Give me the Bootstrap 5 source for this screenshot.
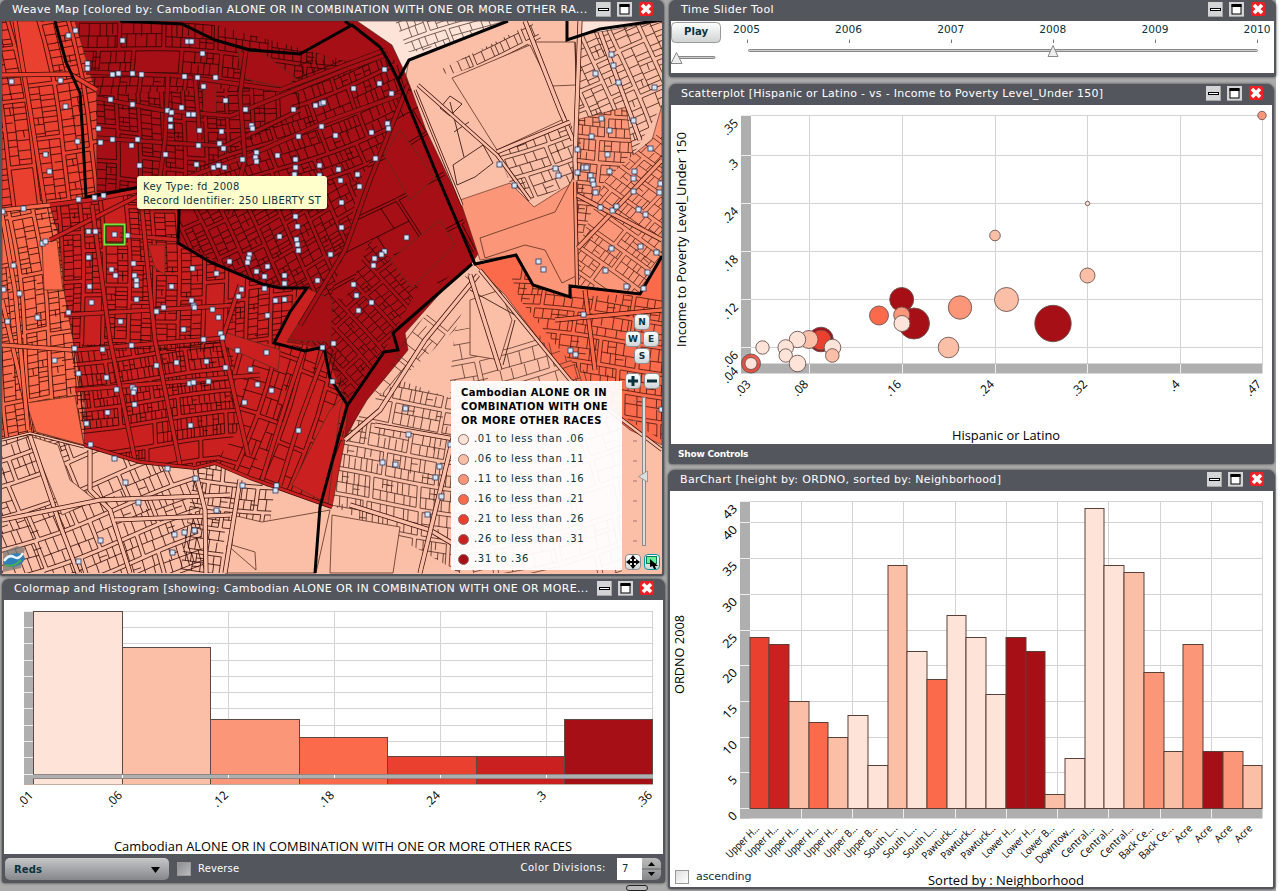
<!DOCTYPE html>
<html lang="en">
<head>
<meta charset="utf-8">
<meta name="viewport" content="width=device-width, initial-scale=1">
<title>Weave</title>
<link rel="stylesheet" href="https://cdn.jsdelivr.net/npm/bootstrap@5.3.0/dist/css/bootstrap.min.css">
<style>
body{width:1280px;height:891px;overflow:hidden;background:#fff;font-family:"DejaVu Sans",sans-serif;font-size:11px;line-height:1.2;color:#0b333c}
.desk{width:1276px;height:891px;background:#acacac}
.colL{width:668px;gap:3px}
.colR{width:608px}
.win{background:#54565e;border:2px solid #54565e;border-top:0;border-radius:7px 7px 3px 3px;box-shadow:0 0 3px #333;overflow:hidden}
.win svg{display:block}
.ttl{height:21px;color:#fff;font-size:11px;padding:0 9px 1px 10px;gap:6px;flex:none}
.ttl b{font-weight:400;white-space:nowrap;flex:1 1 0;min-width:0}
#t1{letter-spacing:.4px}#t4{letter-spacing:.35px}#t5{letter-spacing:.4px}#t6{letter-spacing:.28px}#t7{letter-spacing:.33px}
.wb{flex:none}
.map{height:576px;width:664px}.hist{height:304px;width:663px;margin-left:2px}
.slide{height:77px;width:607px;margin-left:1px}.scat{height:380px;width:605px;margin:7px 0 6px 1px}.bars{height:419px;width:607px}
.foot{color:#fff}
.btnf{border:1px solid #8a8f93;border-radius:4px;background:linear-gradient(#fff,#d2d6d6);color:#0b333c;font-weight:700;padding:0;display:flex;align-items:center;justify-content:center;line-height:1}
.tip{left:135px;top:176px;width:190px;height:33px;background:#ffffcc;border-radius:3px;box-shadow:0 2px 3px #0006;padding:4px 0 0 6px;font-size:10px;line-height:14px;white-space:nowrap;letter-spacing:.33px}
.legend{left:449px;top:381px;width:171px;height:189px;background:#fffffff0;padding:5px 0 0 7px;font-size:10px;line-height:14px}
.legend .hd{color:#000;font-weight:700;padding:0 0 1px 3px;white-space:nowrap;letter-spacing:.32px}
.legend .it{height:20px;gap:5px;letter-spacing:.68px;white-space:nowrap}
.dotc{width:11px;height:11px;border:1px solid #8b6f68;border-radius:50%}
.ctl{left:621px;top:314px;width:38px;height:259px}
.ctl .btnf{width:16px;height:16px;font-size:9px}
.combo{width:164px;height:22px;border-radius:5px;background:linear-gradient(#c2c3c5,#85878b);color:#0b333c;font-weight:700;font-size:10px;padding:0 8px 0 9px;border-top:1px solid #ccc}
.ck{width:14px;height:14px;background:linear-gradient(135deg,#8c8e92,#bbb);border:1px solid #999}
.asc{left:5px;top:379px;gap:7px}
.asc .ck{background:linear-gradient(135deg,#ddd,#fff)}
.num{width:25px;height:22px;background:#fff;color:#0b333c;font-size:10px;padding-left:5px}
.spin{width:19px;height:22px;background:linear-gradient(#bbb,#85878b);border-radius:0 6px 6px 0}
.grip{width:22px;height:6px;border:1px solid #222;border-radius:4px;background:#b8b8b8;margin-left:626px;margin-top:-1px}
text{font-family:"Open Sans","Noto Sans",sans-serif;fill:#000}
.vd{font-family:"DejaVu Sans",sans-serif;fill:#0b333c}
</style>
</head>
<body>
<svg width="0" height="0" class="position-absolute"><defs>
<g id="wbtns"><rect x="0" y="0" width="15" height="15" fill="#d3d4d6"/><path d="M0 14.5h15M14.5 0v15" stroke="#a5a5a5"/><rect x="2.5" y="6.5" width="10" height="2" fill="#fff" stroke="#000"/>
<rect x="21" y="0" width="15" height="15" fill="#d3d4d6"/><path d="M21 14.5h15" stroke="#a5a5a5"/><rect x="24" y="3" width="9" height="9" fill="#fff" stroke="#000"/><path d="M23.5 3.5h10" stroke="#000" stroke-width="3"/>
<rect x="43" y="0" width="14" height="14" rx="2" fill="#ee2024"/><path d="M46 3l8 8m0-8l-8 8" stroke="#fff" stroke-width="3.6"/></g>
</defs></svg>
<div class="desk d-flex">
<div class="colL d-flex flex-column">
 <section class="win map position-relative">
  <header class="ttl d-flex align-items-center"><b id="t1">Weave Map [colored by: Cambodian ALONE OR IN COMBINATION WITH ONE OR MORE OTHER RA...</b><svg class="wb" width="57" height="16"><use href="#wbtns"/></svg></header>
  <svg id="map" width="660" height="553" viewBox="2 21 660 553"></svg>
  <div class="tip position-absolute"><div>Key Type: fd_2008</div><div>Record Identifier: 250 LIBERTY ST</div></div>
  <div class="legend position-absolute"><div class="hd">Cambodian ALONE OR IN<br>COMBINATION WITH ONE<br>OR MORE OTHER RACES</div><div id="leg"></div></div>
  <div class="ctl position-absolute d-flex flex-column align-items-center">
   <div class="d-flex"><span class="btnf">N</span></div>
   <div class="d-flex" style="gap:2px;padding-top:1px"><span class="btnf">W</span><span class="btnf">E</span></div>
   <div class="d-flex" style="padding-top:1px"><span class="btnf">S</span></div>
   <div class="d-flex" style="gap:3px;padding-top:9px"><span class="btnf"><svg width="10" height="10"><path d="M0 5h10M5 0v10" stroke="#0b333c" stroke-width="3"/></svg></span><span class="btnf"><svg width="10" height="10"><path d="M0 5h10" stroke="#0b333c" stroke-width="3"/></svg></span></div>
   <svg width="36" height="162"><rect x="18.500" y="8.500" width="3" height="148" fill="#ddd" stroke="#888"/><path d="M14.500 87.500l9-5.500v11z" fill="#ddd" stroke="#999"/><path d="M9 12h4m-4 20h4m-4 20h4m-4 20h4m-4 20h4m-4 20h4m-4 20h4m-4 20h4" stroke="#a77"/></svg>
   <div class="d-flex" style="gap:3px;padding-top:3px"><span class="btnf"><svg width="14" height="14"><path d="M7 1v12M1 7h12" stroke="#000" stroke-width="2"/><path d="M7 0l3 4H4zM7 14l3-4H4zM0 7l4-3v6zM14 7l-4-3v6z"/></svg></span><span class="btnf" style="border-color:#09a"><svg width="14" height="14"><rect x="1.500" y="1.500" width="10" height="7" fill="#6e9" stroke="#175"/><path d="M5 4l8 7-3 0 1 3-2 0-1.500-3-2.500 1z"/></svg></span></div>
  </div>
 </section>
 <section class="win hist">
  <header class="ttl d-flex align-items-center"><b id="t4">Colormap and Histogram [showing: Cambodian ALONE OR IN COMBINATION WITH ONE OR MORE...</b><svg class="wb" width="57" height="16"><use href="#wbtns"/></svg></header>
  <svg id="hist" width="659" height="254" viewBox="4 600 659 254"></svg>
  <div class="foot d-flex align-items-center" style="padding:4px 2px 0 1px">
   <div class="combo d-flex align-items-center justify-content-between"><span style="letter-spacing:.1px">Reds</span><svg width="10" height="8"><path d="M0 1h9l-4.500 6z"/></svg></div>
   <span class="ck" style="margin:0 7px 0 8px"></span><span style="font-size:10px;letter-spacing:.15px">Reverse</span>
   <span class="ms-auto" style="font-size:10px;letter-spacing:.5px;padding:0 11px 3px 0">Color Divisions:</span><span class="num d-flex align-items-center">7</span>
   <span class="spin"><svg width="19" height="22"><path d="M0 11h19" stroke="#666"/><path d="M6 8h7l-3.500-4zM6 14h7l-3.500 4z"/></svg></span>
  </div>
 </section>
 <div class="grip"></div>
</div>
<div class="colR d-flex flex-column">
 <section class="win slide">
  <header class="ttl d-flex align-items-center"><b id="t5">Time Slider Tool</b><svg class="wb" width="57" height="16"><use href="#wbtns"/></svg></header>
  <svg id="slide" width="603" height="52" viewBox="671 21 603 52"></svg>
 </section>
 <section class="win scat">
  <header class="ttl d-flex align-items-center"><b id="t6">Scatterplot [Hispanic or Latino - vs - Income to Poverty Level_Under 150]</b><svg class="wb" width="57" height="16"><use href="#wbtns"/></svg></header>
  <svg id="scat" width="601" height="339" viewBox="671 105 601 339"></svg>
  <div class="foot fw-bold" style="padding:5px 0 0 7px;font-size:9px;letter-spacing:-.22px">Show Controls</div>
 </section>
 <section class="win bars">
  <header class="ttl d-flex align-items-center"><b id="t7">BarChart [height by: ORDNO, sorted by: Neighborhood]</b><svg class="wb" width="57" height="16"><use href="#wbtns"/></svg></header>
  <div class="position-relative"><svg id="bar" width="603" height="397" viewBox="670 491 603 397"></svg>
  <div class="asc position-absolute d-flex align-items-center"><span class="ck"></span><span style="letter-spacing:-.1px">ascending</span></div></div>
 </section>
</div>
</div>
<script src="https://cdn.jsdelivr.net/npm/bootstrap@5.3.0/dist/js/bootstrap.bundle.min.js"></script>
<script>
const C=['#fde3d8','#fbbfa8','#fb9678','#fb6a4a','#e94030','#cb2020','#a50f15'];
const $=i=>document.getElementById(i);
const ln=(x1,y1,x2,y2,c='#d3d3d3')=>`<path d="M${x1} ${y1}L${x2} ${y2}" stroke="${c}"/>`;
const rc=(x,y,w,h,f,s='none')=>`<rect x="${x}" y="${y}" width="${w}" height="${h}" fill="${f}" stroke="${s}"/>`;
const tx=(t,x,y,s,o='',r=0)=>`<text x="${x}" y="${y}" font-size="${s}" ${o} ${r?`transform="rotate(${r} ${x} ${y})"`:''}>${t}</text>`;
const diag=(t,x,y,s=12,len=0)=>tx(t,x,y,s,'text-anchor="end"'+(len?` textLength="${len}" lengthAdjust="spacingAndGlyphs"`:''),-45);
const fit=l=>`textLength="${l}" lengthAdjust="spacingAndGlyphs"`;

$('leg').innerHTML=['.01 to less than .06','.06 to less than .11','.11 to less than .16','.16 to less than .21','.21 to less than .26','.26 to less than .31','.31 to .36'].map((t,i)=>`<div class="it d-flex align-items-center"><span class="dotc" style="background:${C[i]}"></span>${t}</div>`).join('');

/* histogram */
(()=>{let s=rc(4,600,659,254,'#fff'),gy=[611.5,627.5,643.5,660.5,676.5,692.5,708.5,725.5,741.5,757.5,774.5];
 gy.forEach(y=>s+=ln(33,y,652,y));[228.5,334.5,440.5,546.5,652.5].forEach(x=>s+=ln(x,611,x,784));
 s+=rc(24,611,9.5,173,'#afafaf');gy.forEach(y=>s+=ln(24,y,33,y,'#eee'));
 const X=[33.5,122.5,210.5,299.5,387.5,476.5,564.5,652.5];
 [611,647,719,737,756,756,719].forEach((y,i)=>s+=rc(X[i],y+.5,X[i+1]-X[i],784-y,C[i],'#5c4844'));
 s+=rc(33,775,620,3,'#afafaf')+ln(33,774.5,653,774.5,'#8f8783')+ln(33,778.5,653,778.5,'#8f8783')+ln(24,784.5,653,784.5,'#c9a9a0');
 [122.5,228.5,334.5,440.5,546.5].forEach(x=>s+=ln(x,775,x,778,'#fff'));
 [['.01',33],['.06',122],['.12',228],['.18',334],['.24',440],['.3',546],['.36',652]].forEach(a=>s+=diag(a[0],a[1]+1,796,12,a[0].length>2?16.5:10));
 s+=tx('Cambodian ALONE OR IN COMBINATION WITH ONE OR MORE OTHER RACES',114,850.5,13,fit(458));
 $('hist').innerHTML=s;})();

/* time slider */
(()=>{let s=rc(671,21,604,52,'#fff')+'<defs><linearGradient id="g" x2="0" y2="1"><stop stop-color="#fff"/><stop offset="1" stop-color="#d0d3d3"/></linearGradient></defs>';
 s+='<rect x="671.5" y="22.500" width="49" height="20" rx="4" fill="url(#g)" stroke="#999"/>'+tx('Play',684,35,10,'class="vd" font-weight="bold" '+fit(24));
 [2005,2006,2007,2008,2009,2010].forEach((y,i)=>{const x=746.5+i*102.1;s+=tx(y,x-13.500,33,10,'class="vd" '+fit(27))+ln(Math.round(x)+.5,39.5,Math.round(x)+.5,43,'#777')});
 s+='<rect x="748.500" y="49.500" width="509" height="2" rx="1" fill="#ccc" stroke="#888"/><rect x="678" y="56.500" width="37" height="2" rx="1" fill="#ccc" stroke="#888"/>';
 s+='<path d="M1053 45.500l5 11h-10zM676.500 52.500l5.500 11h-11z" fill="#eee" stroke="#888"/>';
 $('slide').innerHTML=s;})();

/* scatterplot */
(()=>{let s=rc(671,105,602,339,'#fff'),gx=[809.5,902.5,995.5,1087.5,1180.5,1262.5],gy=[115.5,155.5,203.5,251.5,299.5,347.5];
 gx.forEach(x=>s+=ln(x,115,x,364));gy.forEach(y=>s+=ln(751,y,1262,y));
 s+=rc(741,115,10,258,'#afafaf')+rc(741,363.5,521.5,10,'#afafaf');
 gx.slice(0,5).forEach(x=>s+=ln(x,364,x,373,'#eee'));gy.forEach(y=>s+=ln(741,y,751,y,'#eee'));
 ['.35','.3','.24','.18','.12','.06'].forEach((t,i)=>s+=diag(t,739,gy[i]+8.5,12,t.length>2?16.5:10));s+=diag('.04',739,372,12,16.5);
 [['.03',751.5],['.08',809],['.16',902],['.24',995],['.32',1088],['.4',1180.5],['.47',1262]].forEach(a=>s+=diag(a[0],a[1],385,12,a[0].length>2?16.5:10));
 [[901.7,299.5,12,6],[914,323.5,15.5,6],[901.7,315,8,2],[902,323.5,8,0],[879,315.5,9.5,3],[960,307.5,11.700,2],[1006.5,299.5,12,1],[1053,323.5,18.2,6],[948.5,347.5,10.300,1],[995,235.5,5.300,1],[1087.5,275.5,7.500,1],[1087.5,203.5,2.200,0],[1262,115.5,4.200,2],[762.5,347.5,6.700,0],[821,339.5,12.300,6],[821,340,10,4],[809,339.5,9,1],[797.5,339.5,8.200,0],[785.7,347.5,7.800,0],[785.700,355.5,6.700,0],[832.5,347.5,8.300,0],[832.300,355.500,6.800,1],[797.5,363.5,8.300,0],[751,363.5,9.500,4],[751,363.5,6,0]].forEach((c,i)=>s+=`<circle cx="${c[0]}" cy="${c[1]}" r="${c[2]}" fill="${C[c[3]]}" ${i==23?'fill-opacity=".85"':''} stroke="#6b5450" stroke-width=".9"/>`);
 s+=tx('Income to Poverty Level_Under 150',686,347,13,fit(215),-90)+tx('Hispanic or Latino',952,440,13,fit(108));
 $('scat').innerHTML=s;})();

/* bar chart */
(()=>{let s=rc(670,491,603,397,'#fff'),gx=[801.5,852.5,903.5,955.5,1006.5,1057.5,1108.5,1160.5,1211.5,1262.5],vy=v=>Math.round(808-v*7.14)+.5,t=[43,40,35,30,25,20,15,10,5,0];
 gx.forEach(x=>s+=ln(x,501,x,808));t.forEach(v=>s+=ln(750,vy(v),1262,vy(v)));
 s+=rc(740,501,10,317.5,'#afafaf')+rc(740,808.5,522.5,10,'#afafaf');
 gx.slice(0,9).forEach(x=>s+=ln(x,809,x,818,'#eee'));t.forEach(v=>{s+=ln(740,vy(v),750,vy(v),'#eee')+diag(v,738,vy(v)+8,12,v>9?15:7)});
 const V=[24,23,15,12,10,13,6,34,22,18,27,24,16,24,22,2,7,42,34,33,19,8,23,8,8,6],K=[4,5,1,3,1,0,0,1,0,3,0,0,0,6,6,1,0,0,0,1,2,1,2,6,2,1],
 L=['Upper H...','Upper H...','Upper H...','Upper H...','Upper H...','Upper B...','Upper B...','South L...','South L...','South L...','Pawtuck...','Pawtuck...','Pawtuck...','Lower H...','Lower H...','Lower B...','Downtow...','Central...','Central...','Central...','Back Ce...','Back Ce...','Acre','Acre','Acre','Acre'];
 const X=i=>Math.round(749.5+i*19.72)+.5;
 V.forEach((v,i)=>{s+=rc(X(i)-.5,vy(v),X(i+1)-X(i),808.5-vy(v),C[K[i]],'#5c4038')+diag(L[i],X(i)+9.500,829,10.5,i>21?20:({P:44,D:50,B:44}[L[i][0]]||42))});
 s+=tx('ORDNO 2008',684,694,13,fit(79),-90)+tx('Sorted by : Neighborhood',928,885,13,fit(156));
 $('bar').innerHTML=s;})();

/* map */
(()=>{let seed=7;const R=()=>(seed=(seed*16807)%2147483647)/2147483647;
 const pts=a=>a.join(' ');let s='',n=0,defs='';
 const rg=(k,a)=>s+=`<polygon points="${pts(a)}" fill="${C[k]}" stroke="#4a2018" stroke-width=".6"/>`;
 s+=rc(2,21,660,553,C[1]);
 rg(4,[2,21,75,21,92,80,97,95,97,195,50,205,2,210]);
 rg(3,[2,210,50,205,60,240,64,290,84,400,85,447,40,433,2,440]);
 rg(5,[50,205,97,195,180,180,180,243,262,284,307,288,318,293,325,348,348,406,365,400,345,440,332,507,240,475,215,463,195,468,170,467,140,461,84,445,85,405,64,290,60,240]);
 rg(6,[75,21,357,21,392,45,404,70,426,130,482,248,472,263,443,290,405,333,408,350,367,400,345,437,348,406,335,375,325,348,287,342,318,293,307,288,262,284,210,262,180,243,180,180,97,195,97,95]);
 rg(0,[357,21,508,21,409,60,406,75,392,45]);
 rg(2,[460,200,510,183,534,207,572,183,576,120,626,107,633,155,652,140,662,105,662,262,640,294,570,287,572,297,533,285,516,255,480,260]);
 rg(3,[475,265,516,255,533,285,572,297,570,287,640,294,662,258,662,445,630,430,570,380,505,295]);
 rg(0,[580,21,662,21,600,32,580,34]);
 /* street blocks: outline, two rows of lots, narrow streets between */
 const zone=(poly,ang,bw,bh,pw,gap=4,col='#2a0604',sw=.8,skip=.12)=>{
  const xs=poly.filter((_,i)=>i%2==0),ys=poly.filter((_,i)=>i%2),x0=Math.min(...xs),x1=Math.max(...xs),y0=Math.min(...ys),y1=Math.max(...ys);
  const cx=(x0+x1)/2,cy=(y0+y1)/2,r=Math.hypot(x1-x0,y1-y0)/2+10,a=ang*Math.PI/180,co=Math.cos(a),si=Math.sin(a);
  const P=(u,v)=>{const w=v+4*Math.sin(u/45+cx),q=u+3*Math.sin(v/38+cy);return (cx+q*co-w*si).toFixed(1)+' '+(cy+q*si+w*co).toFixed(1)};
  let d='';
  for(let v=-r;v<r;){const h=bh*(.85+R()*.3);for(let u=-r+R()*-bw;u<r;){const w=bw*(.7+R()*.6);
   d+=`M${P(u,v)}L${P(u+w/2,v)} ${P(u+w,v)} ${P(u+w,v+h)} ${P(u+w/2,v+h)} ${P(u,v+h)}Z`;
   if(R()>skip){const m=v+h*(.42+R()*.16);d+=`M${P(u,m)}L${P(u+w,m)}`;
    for(let row=0;row<2;row++){for(let x=u+pw*(.6+R());x<u+w-2;x+=pw*(.65+R()*.9)){const j=R()<.2?(R()-.5)*h*.25:0;d+=row?`M${P(x,m+j)}L${P(x,v+h)}`:`M${P(x,v)}L${P(x,m+j)}`;if(R()<.13)d+=`M${P(x,row?v+h*.75:v+h*.25)}l${(pw*co).toFixed(1)} ${(pw*si).toFixed(1)}`}}}
   u+=w+gap}v+=h+gap}
  n++;defs+=`<clipPath id="z${n}"><polygon points="${pts(poly)}"/></clipPath>`;
  s+=`<g clip-path="url(#z${n})"><path d="${d}" fill="none" stroke="${col}" stroke-width="${sw}"/></g>`};
 zone([2,21,75,21,97,95,97,195,50,205,2,210],79,65,25,7);
 zone([2,210,50,205,60,240,64,290,84,400,85,447,40,433,2,440],83,60,22,6.5);
 zone([75,21,200,21,350,62,300,85,97,95,92,80],4,44,22,7.5);
 zone([97,95,300,85,300,112,180,180,97,195],92,38,20,6);
 zone([300,60,395,60,412,90,360,180,250,200,180,200,180,180,290,112],-21,50,21,6.5);
 zone([180,200,250,200,360,180,345,250,330,300,307,288,262,284,180,243],62,36,20,6);
 zone([412,90,426,130,476,250,440,285,370,240,345,300,330,295,345,250,370,160],-30,95,46,60,3,'#2a0604',.9,.5);
 zone([370,240,420,285,393,333,384,352,347,400,325,347,290,340,318,293,345,300],52,46,19,6);
 zone([50,205,97,195,180,180,180,243,262,284,300,290,274,343,232,352,75,350,64,290],87,48,19,5.7);
 zone([70,345,232,340,238,430,215,463,170,467,84,445],-5,66,18,4.6);
 zone([232,345,274,343,335,350,348,406,332,507,240,475,215,463,238,430],108,60,27,17);
 zone([2,440,40,433,140,461,195,468,205,573,2,573],-19,48,24,8);
 zone([195,468,215,463,275,488,270,520,225,530,222,573,180,573],5,36,19,7);
 zone([408,333,482,260,455,330,400,380,367,405],-48,60,26,13,4,'#4a2820',.8,.3);
 zone([367,405,400,380,455,400,460,573,420,550,332,505,345,437],7,42,21,6.5,4,'#4a2820');
 zone([455,330,520,320,622,400,622,573,455,573,450,380],-14,55,27,14,5,'#5a382d',.8,.3);
 zone([440,70,532,23,545,45,448,75],-22,42,20,7,4,'#3a1c14');
 zone([395,21,508,21,430,50,408,52],-20,45,18,9,4,'#554039');
 zone([580,34,662,21,662,105,633,155,626,107,577,120],70,40,22,7,4,'#3a1c14');
 zone([497,150,572,125,573,183,534,200,510,183],-20,44,22,9,4,'#3a1c14');
 zone([576,120,626,107,633,155,605,180,576,250],3,38,18,6.5,4,'#4a1e14');
 zone([605,180,633,155,662,130,662,258,640,294,575,285,578,248],40,40,18,7,4,'#4a1e14');
 zone([505,260,520,260,533,285,572,297,640,294,662,300,662,440,620,415,560,350,520,300],5,46,21,8,4,'#4a1810');
 /* open ground, parks and rail yards */
 const op=(k,a)=>s+=`<polygon points="${pts(a)}" fill="${C[k]}" stroke="#5a3020" stroke-width=".8"/>`;
 op(1,[452,78,530,45,566,118,497,150]);op(1,[535,42,575,42,576,85,552,86]);op(6,[238,52,262,52,295,78,285,88,242,78]);op(6,[205,80,216,80,216,115,203,112]);
 op(3,[42,243,57,240,63,290,44,290]);op(3,[26,403,75,396,84,445,36,432]);op(5,[148,245,165,245,165,275,155,268]);
 op(1,[30,436,58,445,70,480,95,500,62,515]);op(1,[232,515,262,522,330,510,316,573,225,573,227,545,256,570,255,552,232,545]);
 op(1,[332,515,400,527,393,573,330,573]);op(2,[480,238,555,212,577,170,578,275,562,283,545,250,525,245,485,258]);
 op(5,[224,332,280,350,278,370,222,345]);op(6,[317,293,332,300,331,342,288,340]);op(5,[345,395,340,410,328,504,292,485,330,410]);op(1,[470,300,500,290,512,320,500,360,470,355]);
 op(6,[384,155,400,130,435,178,410,200]);op(6,[390,260,440,220,455,245,412,288]);
 /* tenement lots along the Common and canal */
 s+='<path d="M450 96l-10 12 10 8 12-12zM450 102l14 55M454 132l15-10M453 165l30-20 10 18-18 14-18 8zM575 42l3 80M470 290l45 25M515 320l-12 45" fill="none" stroke="#3a1c14" stroke-width=".9"/>';
 /* main streets */
 const rd=(k,a,w=5)=>s+=`<polyline points="${pts(a)}" fill="none" stroke="#3a0e0a" stroke-width="${w}"/><polyline points="${pts(a)}" fill="none" stroke="${C[k]}" stroke-width="${w-1.500}"/>`;
 rd(4,[15,21,30,110,45,205]);rd(4,[2,75,70,74,97,90]);rd(3,[2,210,50,205]);rd(5,[50,205,97,199,180,182]);
 rd(6,[86,72,180,76,280,90,385,50]);rd(6,[97,98,160,110,230,116,350,68,388,54]);rd(6,[97,138,170,143,225,146,300,110]);rd(6,[180,180,250,155,330,120,400,95]);
 rd(6,[408,85,370,180,345,250,300,325]);rd(6,[246,50,240,95,245,160,230,215]);rd(6,[168,76,165,140,158,190]);rd(6,[195,76,200,140]);
 rd(5,[50,240,150,190]);rd(5,[120,235,180,240]);rd(5,[64,315,240,305]);rd(5,[75,350,225,338]);rd(5,[75,390,260,375]);rd(5,[92,205,110,340,135,460]);rd(5,[140,190,155,340,180,465]);rd(5,[240,285,222,340,248,455]);rd(5,[305,345,290,390,262,480]);rd(5,[325,352,300,420,280,485]);
 rd(3,[2,300,25,400,30,433]);rd(3,[2,215,15,290,28,430]);rd(3,[2,345,72,350]);
 rd(1,[30,436,60,525,78,573]);rd(1,[90,450,90,490,110,510,130,573]);rd(1,[2,520,100,500,230,495]);rd(1,[115,520,230,515]);rd(1,[195,470,205,510,206,573]);rd(1,[240,480,225,573]);
 rd(1,[478,275,425,340,380,410,345,440]);rd(1,[375,425,460,440]);rd(1,[350,505,430,530,455,545]);rd(1,[470,275,500,370]);rd(1,[455,430,420,573]);
 rd(1,[525,21,560,110,573,140]);rd(1,[580,21,575,160,576,180]);rd(2,[575,182,577,285],4);rd(1,[600,32,640,140]);rd(1,[497,152,570,122]);rd(2,[578,248,662,160]);rd(2,[577,195,662,240]);rd(3,[585,290,595,370]);rd(3,[555,320,662,310]);rd(1,[480,270,570,380,662,450],4);rd(1,[418,85,435,100,497,155,530,200],4);rd(1,[415,90,462,205],3);
 rd(5,[84,445,140,462,195,468,215,463,250,478,332,507],4);rd(1,[2,440,30,433,84,447],3);
 /* neighbourhood borders */
 [[55,21,66,62,80,93,83,140,86,197,135,188,180,180,178,243,210,262,262,284,280,288,307,288,290,312,274,343,305,351,324,347,330,378,348,406],[120,21,182,24,215,40,250,50,300,54,352,25,380,47,389,62,398,80,440,182,475,264,516,255,533,285,570,297,570,286,640,294,662,256],[398,80,409,60,508,21],[567,21,567,40,600,29,662,20],[350,25,345,21],[472,264,393,333,398,350,384,352,347,406,320,507,315,573]].forEach(a=>s+=`<polyline points="${pts(a)}" fill="none" stroke="#000" stroke-width="3"/>`);
 /* record markers */
 const M=[75,30,68,35,122,40,187,41,191,41,202,53,87,63,87,68,112,74,118,73,132,73,141,74,184,76,197,77,215,77,203,86,11,81,60,80,65,106,110,99,132,104,225,100,245,109,293,109,315,105,321,103,323,102,167,110,171,112,170,119,170,126,181,107,188,114,193,114,98,128,199,130,221,131,251,125,252,128,321,126,298,136,335,135,100,142,112,139,137,139,131,145,77,141,198,145,219,143,223,148,165,154,45,154,49,171,196,164,139,165,213,167,218,165,224,167,242,159,256,152,255,157,256,161,277,155,295,159,295,167,294,174,319,165,319,175,338,169,340,180,94,197,103,195,78,199,23,208,2,211,42,243,45,241,88,231,95,231,127,235,13,265,3,289,19,293,88,257,111,269,115,275,133,263,134,275,136,280,136,285,89,286,171,286,192,268,216,273,229,261,249,254,248,258,247,262,256,271,267,266,264,276,264,288,284,275,284,283,279,236,295,216,297,226,296,239,297,244,298,250,317,280,330,254,241,289,238,296,
 384,69,353,88,379,83,391,93,387,123,388,128,371,132,375,158,357,174,359,186,341,202,341,227,406,237,384,251,381,254,374,258,373,265,353,284,356,295,611,54,613,65,595,73,618,82,654,87,601,118,609,130,591,136,633,120,577,149,607,154,650,148,577,172,583,167,586,167,609,171,590,175,592,180,593,184,595,192,600,207,612,210,616,206,634,171,633,178,633,191,638,209,645,214,659,192,660,183,611,248,640,246,656,252,605,270,626,286,643,288,647,272,538,261,543,269,499,164,514,185,555,168,558,175,
 91,302,136,299,156,311,163,307,120,321,68,312,37,317,7,321,74,348,54,360,102,349,131,345,78,373,106,377,116,389,132,387,134,389,133,392,134,404,107,412,86,423,90,444,114,458,125,482,138,502,167,468,190,425,193,305,191,300,194,307,212,309,218,317,220,333,222,337,183,329,203,339,176,362,156,365,206,361,225,367,189,383,193,382,208,381,237,350,266,352,250,369,257,384,271,390,244,402,267,315,275,300,284,299,322,347,333,343,332,381,298,430,276,485,275,490,242,485,195,478,216,510,174,534,184,532,194,530,172,552,100,540,78,561,
 356,295,371,302,358,310,405,408,408,434,382,462,395,464,439,466,435,477,441,496,427,514,583,314,570,350,575,354,661,409,450,444];
 for(let i=0;i<M.length;i+=2)s+=`<rect x="${M[i]-2}" y="${M[i+1]-2}" width="5" height="5" fill="#d8e4f4" stroke="#2c3a60" stroke-width=".8"/>`;
 s+='<rect x="104.500" y="224.500" width="20" height="20" fill="none" stroke="#6fea3c" stroke-width="2"/><rect x="106" y="226" width="17" height="17" fill="none" stroke="#064a06"/><rect x="112" y="232" width="5" height="5" fill="#d8e4f4" stroke="#2c3a60" stroke-width=".8"/>';
 s+='<g><path d="M3 552l14-6 8 2-4 20-18 4z" fill="#777" opacity=".75"/><ellipse cx="14" cy="560" rx="11" ry="6.500" fill="#2d7fb8" transform="rotate(-14 14 560)"/><path d="M4 561q5-7 10-4t9-4" stroke="#e8f4ff" stroke-width="2.500" fill="none"/><path d="M5 565q8 3 16-5" stroke="#4faa50" stroke-width="2" fill="none"/></g>';
 $('map').innerHTML='<defs>'+defs+'</defs>'+s;})();
</script>
</body>
</html>
